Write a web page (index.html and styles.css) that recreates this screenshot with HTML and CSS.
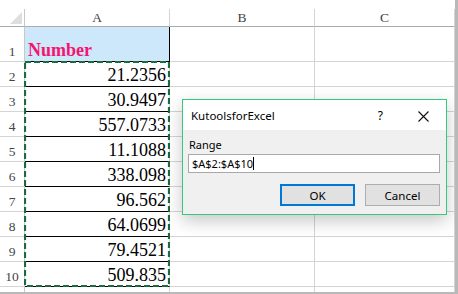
FILE: index.html
```html
<!DOCTYPE html>
<html>
<head>
<meta charset="utf-8">
<link rel="stylesheet" href="styles.css">
</head>
<body>
<div class="sheet">
  <div class="top-strip"></div>
  <div class="grid">
    <div class="hdr corner"><svg width="24" height="18" viewBox="0 0 24 18"><polygon points="22,3 22,15 10,15" fill="#dedede"/></svg></div>
    <div class="hdr col">A</div>
    <div class="hdr col">B</div>
    <div class="hdr col">C</div>

    <div class="rh">1</div>
    <div class="cell a title-cell">Number</div>
    <div class="cell"></div>
    <div class="cell"></div>

    <div class="rh">2</div><div class="cell a num">21.2356</div><div class="cell"></div><div class="cell"></div>
    <div class="rh">3</div><div class="cell a num">30.9497</div><div class="cell"></div><div class="cell"></div>
    <div class="rh">4</div><div class="cell a num">557.0733</div><div class="cell"></div><div class="cell"></div>
    <div class="rh">5</div><div class="cell a num">11.1088</div><div class="cell"></div><div class="cell"></div>
    <div class="rh">6</div><div class="cell a num">338.098</div><div class="cell"></div><div class="cell"></div>
    <div class="rh">7</div><div class="cell a num">96.562</div><div class="cell"></div><div class="cell"></div>
    <div class="rh">8</div><div class="cell a num">64.0699</div><div class="cell"></div><div class="cell"></div>
    <div class="rh">9</div><div class="cell a num">79.4521</div><div class="cell"></div><div class="cell"></div>
    <div class="rh">10</div><div class="cell a num">509.835</div><div class="cell"></div><div class="cell"></div>

    <div class="rh part"></div><div class="cell part"></div><div class="cell part"></div><div class="cell part"></div>
  </div>

  <svg class="marquee" width="146" height="226" viewBox="0 0 146 226">
    <rect x="1" y="1" width="144" height="224" fill="none" stroke="#1c6a40" stroke-width="2.2" stroke-dasharray="6 3"/>
  </svg>

  <div class="dialog">
    <div class="dlg-title">
      <span class="dlg-name">KutoolsforExcel</span>
      <span class="dlg-help">?</span>
      <svg class="dlg-close" width="11" height="11" viewBox="0 0 11 11"><path d="M0.5 0.5 L10.5 10.5 M10.5 0.5 L0.5 10.5" stroke="#111" stroke-width="1.1" fill="none"/></svg>
    </div>
    <div class="dlg-body">
      <div class="dlg-label">Range</div>
      <div class="dlg-input"><span>$A$2:$A$10</span><span class="caret"></span></div>
      <div class="dlg-buttons">
        <div class="btn btn-ok">OK</div>
        <div class="btn">Cancel</div>
      </div>
    </div>
  </div>
</div>
</body>
</html>
```

FILE: styles.css
```css
html, body {
  margin: 0;
  padding: 0;
}
body {
  background: #b9b9b9;
  width: 458px;
  height: 294px;
  overflow: hidden;
}
.sheet {
  position: relative;
  width: 455px;
  height: 292px;
  background: #ffffff;
  overflow: hidden;
}
.top-strip {
  height: 9px;
}
.grid {
  display: grid;
  grid-template-columns: 25px 145px 145px 140px;
  grid-template-rows: 18px 35px repeat(9, 25px) 5px;
}
.grid > div {
  box-sizing: border-box;
}
.hdr {
  border-right: 1px solid #d4d4d4;
  border-bottom: 1px solid #ababab;
  font-family: "Liberation Serif", serif;
  font-size: 13.5px;
  line-height: 17px;
  color: #444444;
  text-align: center;
}
.hdr.corner {
  border-right: 1px solid #c8c8c8;
}
.hdr.corner svg {
  display: block;
}
.rh {
  border-right: 1px solid #c8c8c8;
  border-bottom: 1px solid #d4d4d4;
  font-family: "Liberation Serif", serif;
  font-size: 13.5px;
  line-height: 15px;
  color: #444444;
  text-align: center;
  display: flex;
  align-items: flex-end;
  justify-content: center;
  padding-bottom: 2px;
}
.cell {
  border-right: 1px solid #d4d4d4;
  border-bottom: 1px solid #d4d4d4;
}
.cell.part, .rh.part {
  border-bottom: none;
}
.cell.a {
  font-family: "Liberation Serif", serif;
  font-size: 18px;
  line-height: 20px;
  color: #000000;
  display: flex;
  align-items: flex-end;
  padding-bottom: 1px;
  border-bottom: 1px solid #000000;
}
.cell.num {
  justify-content: flex-end;
  padding-right: 3px;
}
.title-cell {
  background: #cde8fb;
  color: #f5146f !important;
  font-weight: bold;
  padding-left: 3px;
  border-right: 1px solid #000000 !important;
}
.marquee {
  position: absolute;
  left: 24px;
  top: 61px;
}
.dialog {
  position: absolute;
  left: 182px;
  top: 99px;
  width: 265px;
  height: 116px;
  box-sizing: border-box;
  border: 1px solid #35c97a;
  background: #f0f0f0;
  box-shadow: 0 6px 16px rgba(0, 0, 0, 0.22);
  font-family: "Noto Sans", sans-serif;
  font-size: 11px;
  color: #000000;
  display: flex;
  flex-direction: column;
}
.dlg-title {
  height: 30px;
  background: #ffffff;
  display: flex;
  align-items: center;
  padding-left: 8px;
  padding-top: 1px;
  box-sizing: border-box;
}
.dlg-name {
  flex: 1;
  font-size: 11.5px;
}
.dlg-help {
  font-size: 12px;
  margin-right: 35px;
}
.dlg-close {
  margin-right: 17px;
  margin-top: 1px;
}
.dlg-body {
  flex: 1;
  padding: 7px 6px 0 5px;
  display: flex;
  flex-direction: column;
}
.dlg-label {
  line-height: 15px;
  padding-left: 1px;
}
.dlg-input {
  margin-top: 2px;
  height: 19px;
  box-sizing: border-box;
  border: 1px solid #a8a8a8;
  background: #ffffff;
  padding-left: 3px;
  line-height: 17px;
  display: flex;
  align-items: center;
}
.caret {
  display: inline-block;
  width: 1px;
  height: 13px;
  background: #000000;
  margin-left: 0px;
}
.dlg-buttons {
  margin-top: 11px;
  display: flex;
  justify-content: flex-end;
  gap: 10px;
}
.btn {
  width: 75px;
  height: 22px;
  box-sizing: border-box;
  border: 1px solid #adadad;
  background: #e1e1e1;
  display: flex;
  align-items: center;
  justify-content: center;
  font-size: 11.5px;
}
.btn-ok {
  border: 2px solid #0078d7;
}
```
